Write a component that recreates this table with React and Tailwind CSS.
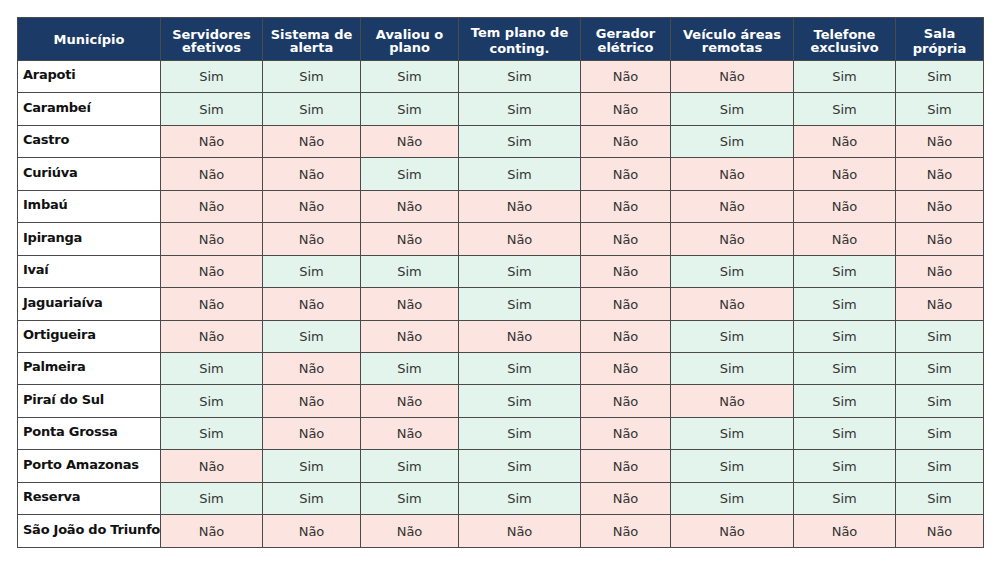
const cols = [
  ['Servidores', 'efetivos', 'leading-[13px]'],
  ['Sistema de', 'alerta', 'leading-[13px]'],
  ['Avaliou o', 'plano', 'leading-[13px]'],
  ['Tem plano de', 'conting.', 'leading-[16px]'],
  ['Gerador', 'elétrico', 'leading-[14px]'],
  ['Veículo áreas', 'remotas', 'leading-[13px]'],
  ['Telefone', 'exclusivo', 'leading-[13px]'],
  ['Sala', 'própria', 'leading-[15px]'],
]

const widths = ['w-[143px]', 'w-[102px]', 'w-[98px]', 'w-[98px]', 'w-[122px]', 'w-[90px]', 'w-[123px]', 'w-[102px]', 'w-[88px]']

// 1 = Sim, 0 = Não
const rows = [
  ['Arapoti', '11110011'],
  ['Carambeí', '11110111'],
  ['Castro', '00010100'],
  ['Curiúva', '00110000'],
  ['Imbaú', '00000000'],
  ['Ipiranga', '00000000'],
  ['Ivaí', '01110110'],
  ['Jaguariaíva', '00010010'],
  ['Ortigueira', '01000111'],
  ['Palmeira', '10110111'],
  ['Piraí do Sul', '10010011'],
  ['Ponta Grossa', '10010111'],
  ['Porto Amazonas', '01110111'],
  ['Reserva', '11110111'],
  ['São João do Triunfo', '00000000'],
]

export default function App() {
  return (
    <div className="w-[1000px] h-[564px] bg-white pt-[17px] pl-[17px] font-['DejaVu_Sans',sans-serif]">
      <table className="border-collapse table-fixed w-[966px] text-[13px]">
        <colgroup>
          {widths.map((w, i) => (
            <col key={i} className={w} />
          ))}
        </colgroup>
        <thead>
          <tr className="h-[43px] bg-[#1b3a66] text-white">
            <th className="border border-[#4a4a4a] font-bold leading-[14px] px-1 pt-[2px]">Município</th>
            {cols.map((c, i) => (
              <th key={i} className={'border border-[#4a4a4a] font-bold px-1 pt-[3px] ' + c[2]}>
                {c[0]}
                <br />
                {c[1]}
              </th>
            ))}
          </tr>
        </thead>
        <tbody>
          {rows.map(([name, vals]) => (
            <tr key={name} className="h-[32.45px]">
              <td className="border border-[#4a4a4a] bg-white font-bold text-[#111] pl-[5px] pr-0 pb-[3px] whitespace-nowrap tracking-[-0.25px]">
                {name}
              </td>
              {vals.split('').map((v, i) => (
                <td
                  key={i}
                  className={
                    v === '1'
                      ? 'border border-[#4a4a4a] bg-[#e3f4ec] text-[#333] text-center pt-[1px]'
                      : 'border border-[#4a4a4a] bg-[#fce4e0] text-[#333] text-center pt-[1px]'
                  }
                >
                  {v === '1' ? 'Sim' : 'Não'}
                </td>
              ))}
            </tr>
          ))}
        </tbody>
      </table>
    </div>
  )
}
